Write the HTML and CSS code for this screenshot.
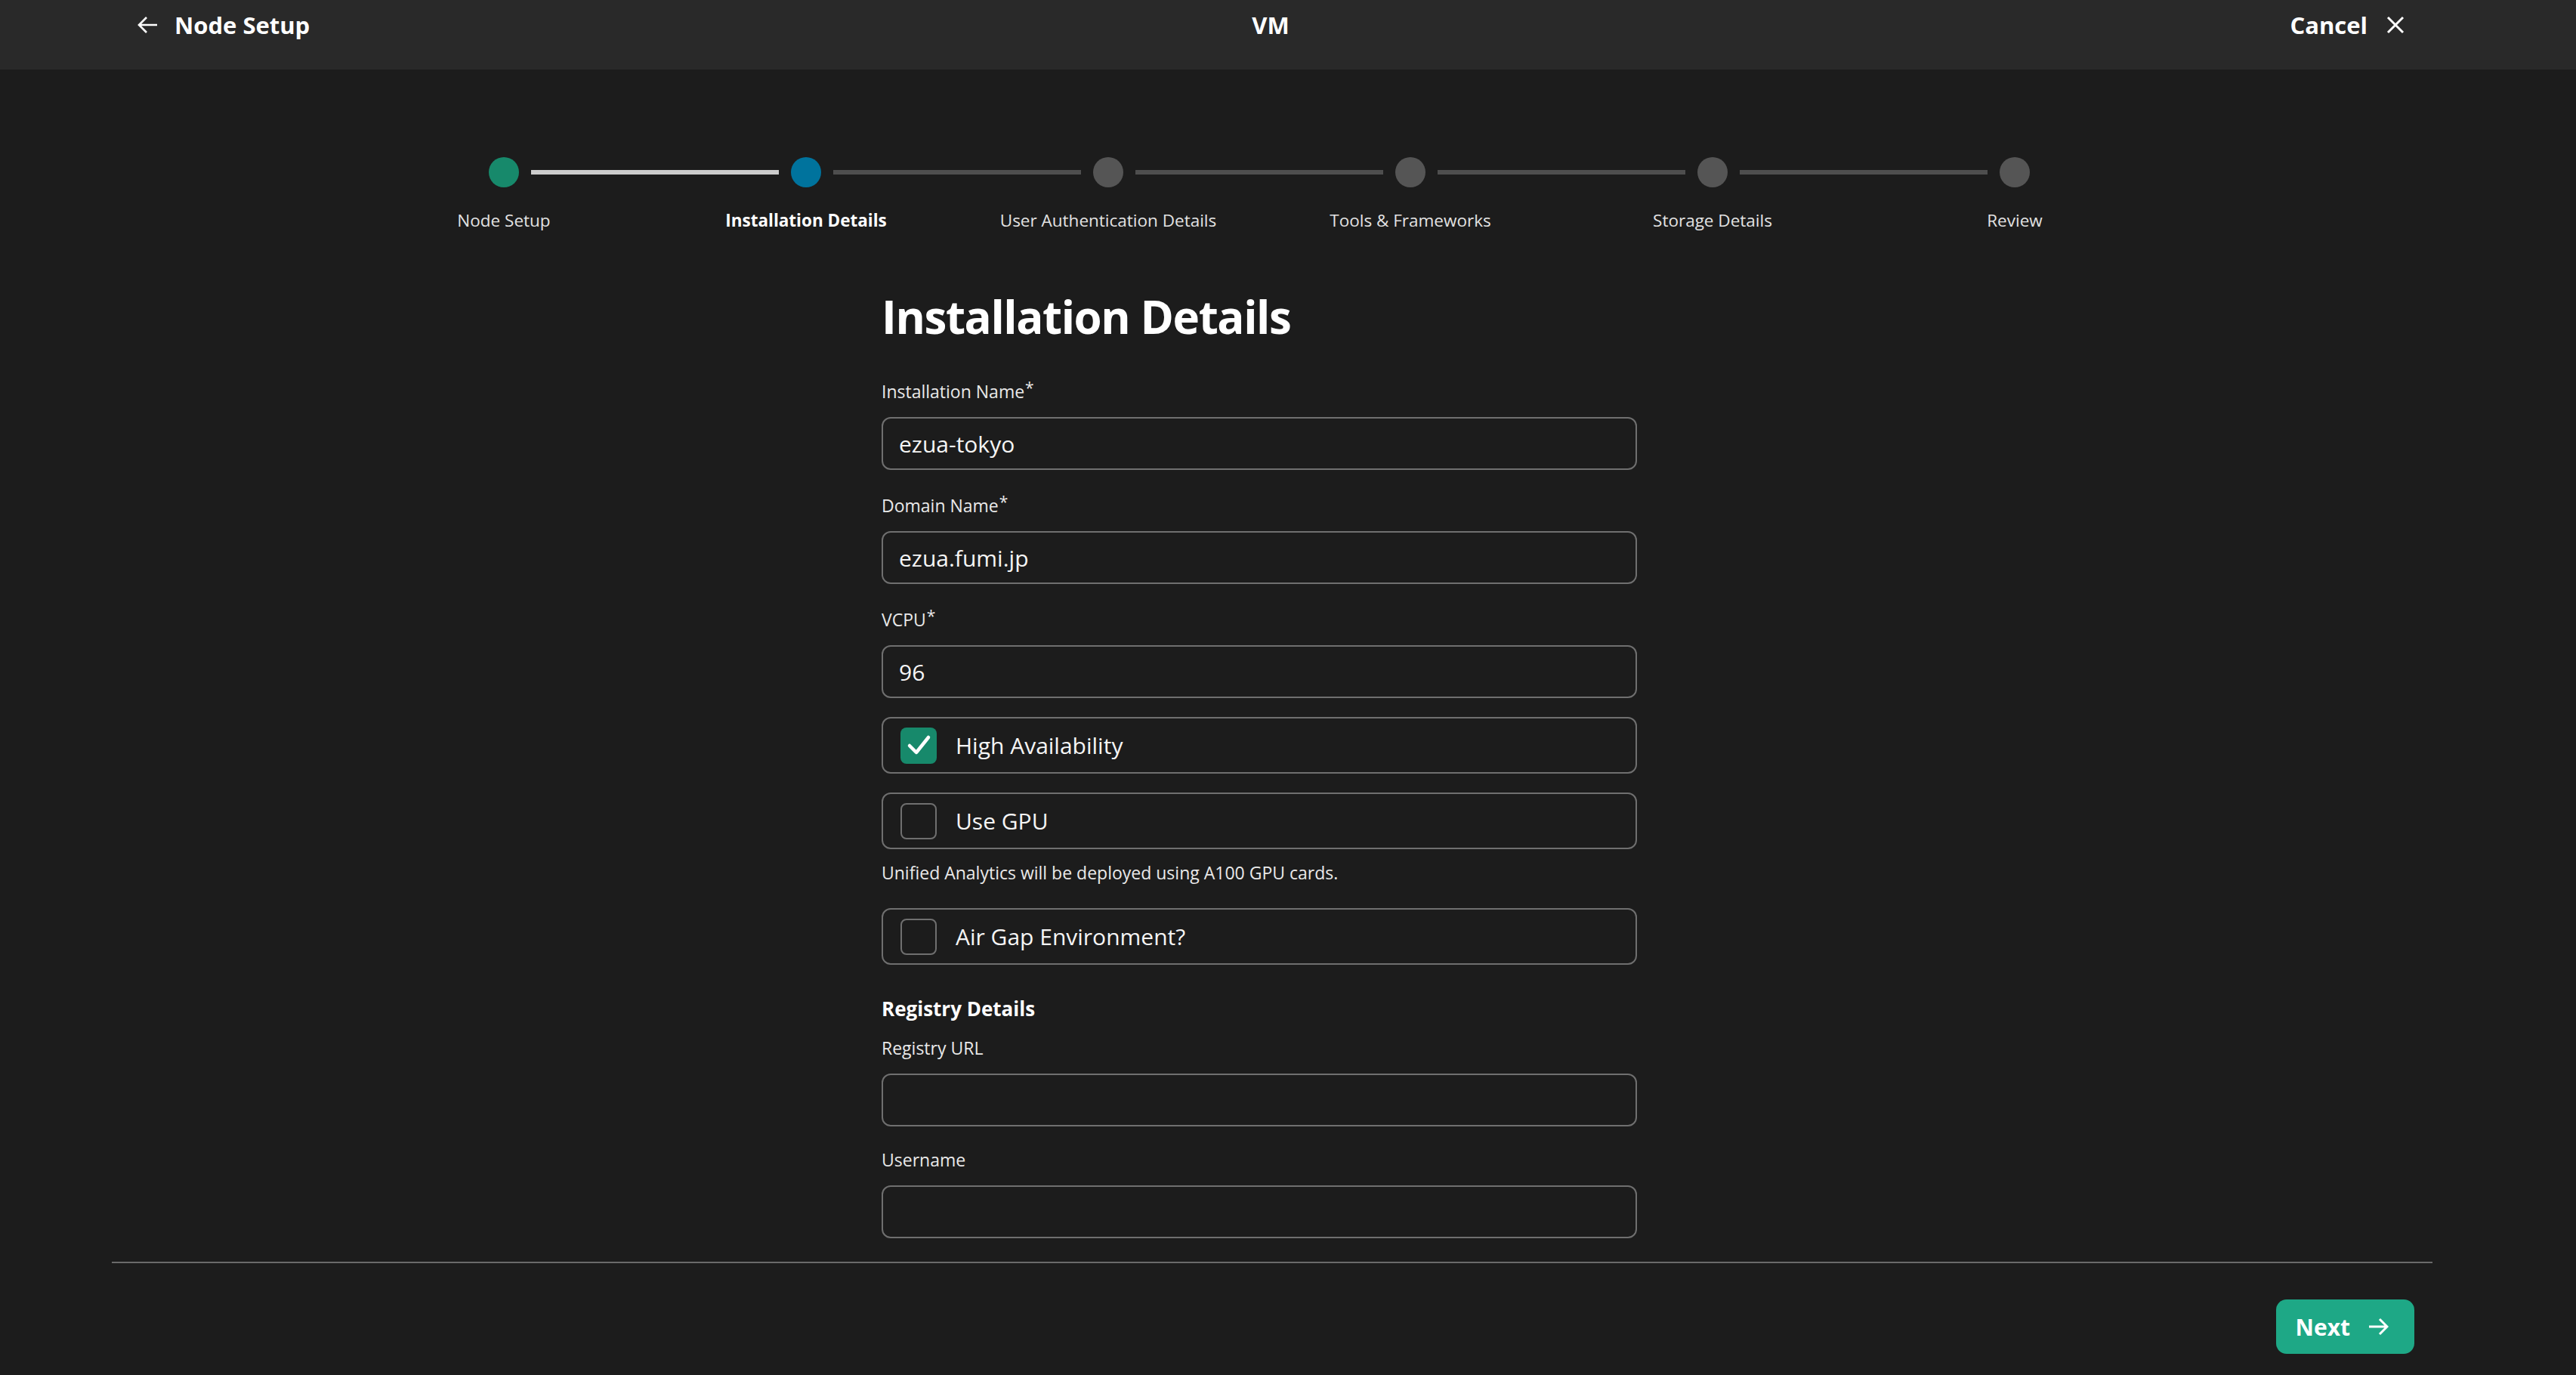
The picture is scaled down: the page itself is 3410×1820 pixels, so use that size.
FILE: index.html
```html
<!DOCTYPE html>
<html lang="en">
<head>
<meta charset="utf-8">
<title>Installation Details</title>
<link rel="stylesheet" href="styles.css">
</head>
<body>
<div class="app">
  <header class="topbar">
    <div class="topbar-left">
      <svg class="icon" width="28" height="24" viewBox="0 0 28 24" aria-hidden="true"><path d="M27 12H3M13 2 3 12l10 10" fill="none" stroke="#ffffff" stroke-width="2.6"/></svg>
      <span>Node Setup</span>
    </div>
    <div class="topbar-title">VM</div>
    <div class="topbar-right">
      <span>Cancel</span>
      <svg class="icon" width="24" height="24" viewBox="0 0 24 24" aria-hidden="true"><path d="M2 2l20 20M22 2 2 22" fill="none" stroke="#ffffff" stroke-width="3"/></svg>
    </div>
  </header>

  <main class="main">
    <ol class="stepper">
      <li class="step done">
        <div class="track"><span class="seg none"></span><span class="dot"></span><span class="seg light"></span></div>
        <span class="step-label">Node Setup</span>
      </li>
      <li class="step current">
        <div class="track"><span class="seg light"></span><span class="dot"></span><span class="seg"></span></div>
        <span class="step-label">Installation Details</span>
      </li>
      <li class="step">
        <div class="track"><span class="seg"></span><span class="dot"></span><span class="seg"></span></div>
        <span class="step-label">User Authentication Details</span>
      </li>
      <li class="step">
        <div class="track"><span class="seg"></span><span class="dot"></span><span class="seg"></span></div>
        <span class="step-label">Tools &amp; Frameworks</span>
      </li>
      <li class="step">
        <div class="track"><span class="seg"></span><span class="dot"></span><span class="seg"></span></div>
        <span class="step-label">Storage Details</span>
      </li>
      <li class="step">
        <div class="track"><span class="seg"></span><span class="dot"></span><span class="seg none"></span></div>
        <span class="step-label">Review</span>
      </li>
    </ol>

    <form class="form">
      <h1 class="form-title">Installation Details</h1>

      <div class="field">
        <label class="label" for="inst">Installation Name<span class="req">*</span></label>
        <input class="input" id="inst" type="text" value="ezua-tokyo">
      </div>

      <div class="field">
        <label class="label" for="dom">Domain Name<span class="req">*</span></label>
        <input class="input" id="dom" type="text" value="ezua.fumi.jp">
      </div>

      <div class="field field-last">
        <label class="label" for="vcpu">VCPU<span class="req">*</span></label>
        <input class="input" id="vcpu" type="text" value="96">
      </div>

      <div class="check">
        <span class="box checked"><svg viewBox="0 0 48 48" aria-hidden="true"><polyline points="12,24 21,33 37,13" fill="none" stroke="#ffffff" stroke-width="4.5" stroke-linecap="round" stroke-linejoin="round"/></svg></span>
        <span>High Availability</span>
      </div>

      <div class="check check-next">
        <span class="box"></span>
        <span>Use GPU</span>
      </div>

      <p class="help">Unified Analytics will be deployed using A100 GPU cards.</p>

      <div class="check check-air">
        <span class="box"></span>
        <span>Air Gap Environment?</span>
      </div>

      <h2 class="section-title">Registry Details</h2>

      <div class="field field-reg">
        <label class="label" for="url">Registry URL</label>
        <input class="input" id="url" type="text" value="">
      </div>

      <div class="field">
        <label class="label" for="user">Username</label>
        <input class="input" id="user" type="text" value="">
      </div>
    </form>
  </main>

  <footer class="footer">
    <button class="btn-next" type="button">
      <span>Next</span>
      <svg width="26" height="24" viewBox="0 0 26 24" aria-hidden="true"><path d="M0 12h24M14 2l10 10-10 10" fill="none" stroke="#ffffff" stroke-width="3"/></svg>
    </button>
  </footer>
</div>
</body>
</html>
```

FILE: styles.css
```css
* {
  box-sizing: border-box;
  margin: 0;
  padding: 0;
}

html, body {
  height: 100%;
}

body {
  background: #1c1c1c;
  color: #f7f7f7;
  font-family: "Open Sans", "Noto Sans", "Liberation Sans", sans-serif;
  overflow: hidden;
}

.app {
  display: flex;
  flex-direction: column;
  height: 100vh;
}

/* ---------- top bar ---------- */
.topbar {
  flex: 0 0 92px;
  background: #292929;
  display: grid;
  grid-template-columns: 1fr auto 1fr;
  align-items: start;
  padding: 12px 227px 0 181px;
  font-size: 31px;
  line-height: 42px;
  font-weight: 700;
  color: #ffffff;
}

.topbar-left {
  display: flex;
  align-items: center;
  gap: 22px;
}

.topbar-right {
  display: flex;
  align-items: center;
  justify-content: flex-end;
  gap: 25px;
}

.icon {
  display: block;
  flex: none;
}

/* ---------- main ---------- */
.main {
  flex: 1 1 auto;
  overflow: hidden;
  padding-right: 76px;
}

.stepper {
  list-style: none;
  width: 2400px;
  margin: 116px auto 0;
  display: grid;
  grid-template-columns: repeat(6, 400px);
}

.step {
  display: flex;
  flex-direction: column;
  align-items: center;
}

.track {
  display: flex;
  align-items: center;
  gap: 16px;
  width: 100%;
  height: 40px;
}

.seg {
  flex: 1;
  height: 6px;
  background: #4e4e4e;
}

.seg.light {
  background: #cccccc;
}

.seg.none {
  visibility: hidden;
}

.dot {
  flex: none;
  width: 40px;
  height: 40px;
  border-radius: 50%;
  background: #555555;
}

.step.done .dot {
  background: #17896b;
}

.step.current .dot {
  background: #00739d;
}

.step-label {
  margin-top: 29px;
  font-size: 22.5px;
  line-height: 30px;
  color: #e2e2e2;
  white-space: nowrap;
}

.step.current .step-label {
  font-weight: 700;
  color: #ffffff;
}

/* ---------- form ---------- */
.form {
  width: 1000px;
  margin: 0 auto;
}

.form-title {
  margin-top: 76px;
  font-size: 60px;
  line-height: 72px;
  font-weight: 700;
  letter-spacing: -1.4px;
  color: #ffffff;
}

.field {
  margin-top: 32px;
}

.form-title + .field {
  margin-top: 48px;
}

.label {
  display: block;
  font-size: 23px;
  line-height: 30px;
  margin-bottom: 19px;
  color: #e9e9e9;
}

.req {
  font-size: 21px;
  line-height: 0;
  vertical-align: 6px;
  margin-left: 1px;
}

.input {
  display: block;
  width: 100%;
  height: 70px;
  border: 2px solid #6f6f6f;
  border-radius: 12px;
  background: transparent;
  padding: 0 21px;
  font-family: inherit;
  font-size: 30px;
  color: #f5f5f5;
  outline: none;
}

.check {
  margin-top: 25px;
  height: 75px;
  border: 2px solid #6f6f6f;
  border-radius: 12px;
  display: flex;
  align-items: center;
  gap: 25px;
  padding-left: 23px;
  font-size: 30px;
  color: #f5f5f5;
}

.box {
  flex: none;
  width: 48px;
  height: 48px;
  border: 2px solid #6f6f6f;
  border-radius: 8px;
}

.box.checked {
  border: none;
  background: #17896b;
}

.box svg {
  display: block;
  width: 48px;
  height: 48px;
}

.help {
  margin-top: 16px;
  font-size: 23px;
  line-height: 30px;
  color: #e9e9e9;
}

.check-air {
  margin-top: 32px;
}

.section-title {
  margin-top: 41px;
  font-size: 26px;
  line-height: 34px;
  font-weight: 700;
  color: #ffffff;
}

.field-reg {
  margin-top: 20px;
}

.field-reg + .field {
  margin-top: 29px;
}

/* ---------- footer ---------- */
.footer {
  flex: none;
  margin: 0 190px 0 148px;
  border-top: 2px solid #6a6a6a;
  display: flex;
  justify-content: flex-end;
  padding: 48px 24px 28px 0;
}

.btn-next {
  display: flex;
  align-items: center;
  gap: 25px;
  height: 72px;
  padding: 0 34px 0 26px;
  border: none;
  border-radius: 14px;
  background: #1ea886;
  color: #ffffff;
  font-family: inherit;
  font-size: 30px;
  font-weight: 700;
}
```
